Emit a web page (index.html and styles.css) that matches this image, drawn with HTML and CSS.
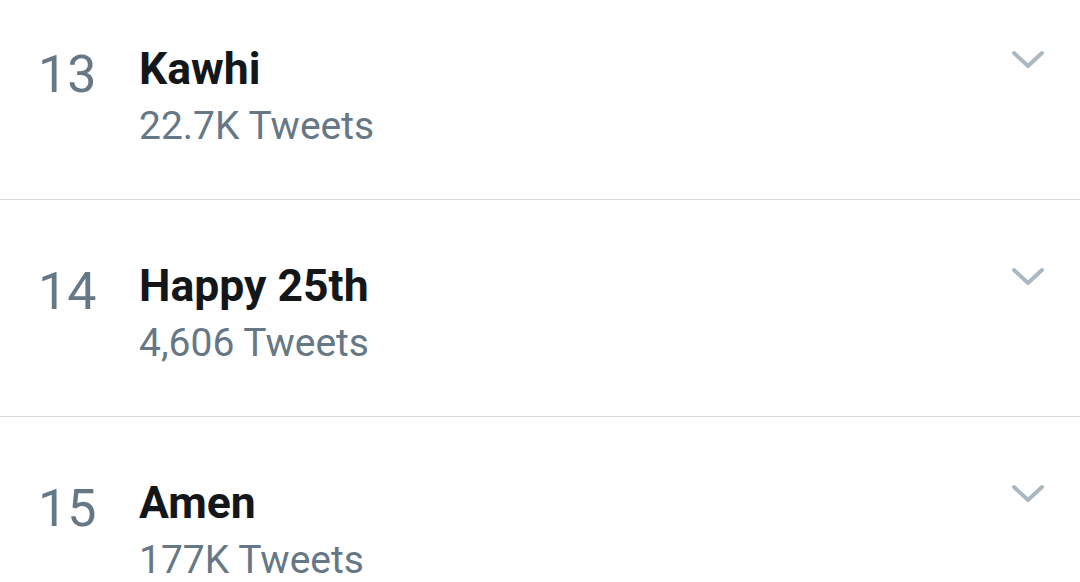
FILE: index.html
```html
<!DOCTYPE html>
<html>
<head>
<meta charset="utf-8">
<link rel="stylesheet" href="styles.css">
</head>
<body>
<div class="list">
  <div class="row">
    <div class="rank">13</div>
    <div class="info">
      <div class="title">Kawhi</div>
      <div class="count">22.7K Tweets</div>
    </div>
    <svg class="chev" width="34" height="20" viewBox="0 0 34 20"><path d="M3 3 L17 16 L31 3" fill="none" stroke="#aab8c2" stroke-width="4" stroke-linecap="round" stroke-linejoin="round"/></svg>
  </div>
  <div class="row">
    <div class="rank">14</div>
    <div class="info">
      <div class="title">Happy 25th</div>
      <div class="count">4,606 Tweets</div>
    </div>
    <svg class="chev" width="34" height="20" viewBox="0 0 34 20"><path d="M3 3 L17 16 L31 3" fill="none" stroke="#aab8c2" stroke-width="4" stroke-linecap="round" stroke-linejoin="round"/></svg>
  </div>
  <div class="row">
    <div class="rank">15</div>
    <div class="info">
      <div class="title">Amen</div>
      <div class="count">177K Tweets</div>
    </div>
    <svg class="chev" width="34" height="20" viewBox="0 0 34 20"><path d="M3 3 L17 16 L31 3" fill="none" stroke="#aab8c2" stroke-width="4" stroke-linecap="round" stroke-linejoin="round"/></svg>
  </div>
</div>
</body>
</html>
```
FILE: styles.css
```css
html, body {
  margin: 0;
  padding: 0;
  background: #ffffff;
  font-family: Roboto, "Noto Sans", sans-serif;
  overflow: hidden;
}
.list {
  margin-top: -17px;
}
.row {
  display: flex;
  align-items: flex-start;
  height: 216px;
  border-bottom: 1px solid #d8dcde;
  padding-left: 38px;
  padding-right: 35px;
  box-sizing: content-box;
}
.rank {
  width: 101px;
  flex: none;
  padding-top: 62px;
  font-size: 52px;
  line-height: 60px;
  color: #667785;
}
.info {
  flex: 1;
  padding-top: 61px;
}
.title {
  font-size: 44.5px;
  line-height: 50px;
  font-weight: 700;
  color: #14171a;
}
.count {
  margin-top: 9px;
  font-size: 39px;
  line-height: 46px;
  color: #667785;
}
.chev {
  flex: none;
  margin-top: 67px;
}
```
